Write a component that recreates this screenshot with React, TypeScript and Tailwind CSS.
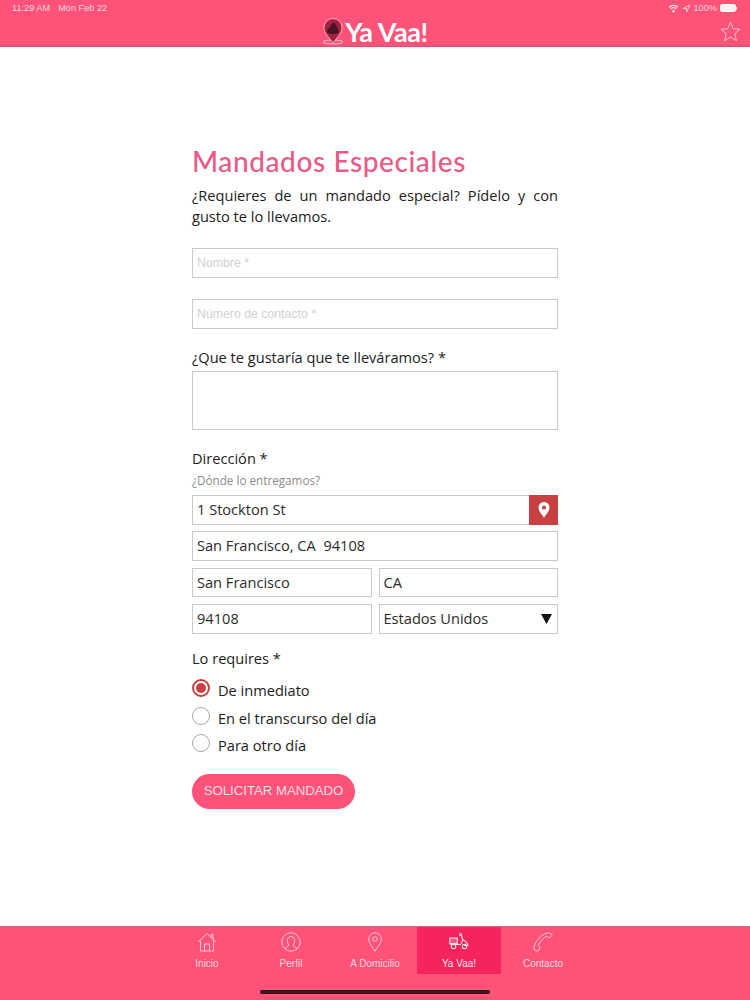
import React from "react";

const inputClass =
    "block w-full h-full min-w-0 border border-[#c9c9c9] bg-white px-[4px] pb-[2px] font-['Open_Sans',sans-serif] text-[14.6px] text-[#2b2b2b] outline-none";

const placeholderClass =
    "block w-full h-[30px] border border-[#c9c9c9] bg-white px-[4px] font-['Liberation_Sans',sans-serif] text-[12.3px] text-[#2b2b2b] outline-none placeholder:text-[#d0d0d0]";

const HomeIcon = () => (
    <svg width="20" height="20" viewBox="0 0 20 20" fill="none" stroke="currentColor" strokeWidth="0.9">
        <path d="M1 10 L10 1.5 L19 10" />
        <path d="M14 5.5 V2.5 H16 V7.5" />
        <path d="M3.5 8.5 V19 H16.5 V8.5" />
        <path d="M7.5 19 V12 H12.5 V19" />
    </svg>
);

const UserIcon = () => (
    <svg width="20" height="20" viewBox="0 0 20 20" fill="none" stroke="currentColor" strokeWidth="0.9">
        <circle cx="10" cy="10" r="9.2" />
        <path d="M4.5 17 C5 14.5 7.5 14.5 8 13 C6.5 11.5 6 9.5 6.5 7.5 C7 5.5 8.5 4.5 10 4.5 C11.5 4.5 13 5.5 13.5 7.5 C14 9.5 13.5 11.5 12 13 C12.5 14.5 15 14.5 15.5 17" />
    </svg>
);

const PinIcon = () => (
    <svg width="14" height="20" viewBox="0 0 14 20" fill="none" stroke="currentColor" strokeWidth="0.9">
        <path d="M7 19.3 C4.5 15 0.8 11.5 0.8 7 A6.2 6.2 0 0 1 13.2 7 C13.2 11.5 9.5 15 7 19.3 Z" />
        <circle cx="7" cy="7" r="2.3" />
    </svg>
);

const ScooterIcon = () => (
    <svg width="20" height="17" viewBox="0 0 20 17" fill="none" stroke="currentColor" strokeWidth="1.1">
        <rect x="0.8" y="5" width="7.5" height="5.5" fill="currentColor" fillOpacity="0.25" />
        <path d="M1 11.5 H11 C12 11.5 13 9.5 13.5 6.5 L12.5 2.5 H10.5" />
        <path d="M13.5 6.5 C15.5 7.5 18.5 9 18.8 12.5 H15" />
        <circle cx="4.5" cy="13.5" r="2.2" />
        <circle cx="15.5" cy="13.5" r="2.2" />
        <path d="M10 1 H13" />
    </svg>
);

// handset drawn diagonally, earpiece up on the right
const PhoneIcon = () => (
    <svg width="20" height="20" viewBox="0 0 20 20" fill="none" stroke="currentColor" strokeWidth="0.9">
        <path d="M1.2 14 C2.5 9 8.5 2.5 13.5 1.2 C15 0.8 18 1 18.8 2.5 C19.2 3.5 18.3 4.6 17.3 5 L15.5 5.6 C14.8 5.2 14.6 4.4 14 4 C10.5 5.5 6.5 10 5.3 13.5 C5.8 14.5 6.5 14.5 6.8 15.3 L5.8 18.2 C5 19 3.2 19.3 2.3 18.6 C1.3 17.8 0.9 15.5 1.2 14 Z" />
    </svg>
);

const tabs = [
    { label: "Inicio", icon: <HomeIcon /> },
    { label: "Perfil", icon: <UserIcon /> },
    { label: "A Domicilio", icon: <PinIcon /> },
    { label: "Ya Vaa!", icon: <ScooterIcon />, active: true },
    { label: "Contacto", icon: <PhoneIcon /> },
];

const radios = [
    { label: "De inmediato", checked: true },
    { label: "En el transcurso del día" },
    { label: "Para otro día" },
];

const StatusBar = () => (
    <div className="flex h-[17px] items-center justify-between pr-[13px] pl-[12px] font-['Liberation_Sans',sans-serif] text-[9.2px] text-[#ffd3dd]">
        <div className="flex gap-[8px]">
            <span>11:29 AM</span>
            <span>Mon Feb 22</span>
        </div>
        <div className="flex items-center gap-[3px]">
            <svg width="11" height="9" viewBox="0 0 11 9" fill="none" stroke="#ffe4ea" strokeWidth="1.2">
                <path d="M1 3.2 C3.5 0.8 7.5 0.8 10 3.2" />
                <path d="M2.8 5 C4.3 3.6 6.7 3.6 8.2 5" />
                <circle cx="5.5" cy="7.3" r="0.7" fill="#ffe4ea" />
            </svg>
            <svg width="9" height="9" viewBox="0 0 9 9" fill="none" stroke="#ffd3dd" strokeWidth="0.9">
                <path d="M8 1 L1 4.5 H4.5 V8 Z" />
            </svg>
            <span>100%</span>
            <div className="flex items-center">
                <div className="h-[8px] w-[16px] rounded-[2px] bg-[#fff3f5]" />
                <div className="h-[3px] w-[1px] bg-[#ffd3dd]" />
            </div>
        </div>
    </div>
);

const Header = () => (
    <header className="relative h-[47px] border-b border-[#e0516f] bg-[#fd5379]">
        <StatusBar />
        <div className="flex h-[29px] items-center justify-center gap-[1px]">
            <svg width="22" height="27" viewBox="0 0 22 27">
                <ellipse cx="11" cy="24" rx="10" ry="2" fill="none" stroke="#ffd3dd" strokeWidth="0.8" />
                <path d="M11 25 C8 20 2 16 2 9.5 A9 9 0 0 1 20 9.5 C20 16 14 20 11 25 Z" fill="#a3213f" stroke="#ffc7d3" strokeWidth="0.8" />
                <path d="M5 14 C6 9 8 11 9 7 C11 3 14 5 15 9 L17 14 C14 17 8 17 5 14 Z" fill="#4a1424" />
            </svg>
            <span className="font-['Lato',sans-serif] text-[27px] leading-none font-bold tracking-[-0.4px] text-white">
                Ya Vaa!
            </span>
        </div>
        <svg className="absolute top-[21px] right-[9px]" width="21" height="21" viewBox="0 0 21 21" fill="none" stroke="#ffc2d0" strokeWidth="1">
            <path d="M10.5 1.2 L13.2 7.8 L20 8.3 L14.8 12.8 L16.5 19.8 L10.5 16 L4.5 19.8 L6.2 12.8 L1 8.3 L7.8 7.8 Z" />
        </svg>
    </header>
);

const Footer = () => (
    <footer className="h-[74px] border-t border-[#e8607f] bg-[#fd5379]">
        <nav className="flex justify-center">
            {tabs.map((tab) => (
                <div
                    key={tab.label}
                    className={`flex h-[47px] w-[84px] flex-col items-center pt-[4px] font-['Liberation_Sans',sans-serif] text-[10px] text-[#ffd3dd] ${
                        tab.active ? "bg-[#f4255c] text-[#ffe4ea]" : ""
                    }`}
                >
                    <div className="flex h-[21px] items-center">{tab.icon}</div>
                    <span className="mt-[6px] leading-[12px]">{tab.label}</span>
                </div>
            ))}
        </nav>
        <div className="mx-auto mt-[16px] h-[4px] w-[230px] rounded-full bg-[#3b1722]" />
    </footer>
);

const App = () => {
    return (
        <div className="flex h-[1000px] w-[750px] flex-col overflow-hidden bg-white">
            <Header />
            <main className="flex-1 px-[192px] pt-[97px] font-['Open_Sans',sans-serif] text-[#1c1c1c]">
                <h1 className="h-[34px] font-['Lato',sans-serif] text-[28px] leading-[34px] font-medium tracking-[0.6px] whitespace-nowrap text-[#ea5a86]">
                    Mandados Especiales
                </h1>
                <p className="mt-[7px] text-justify text-[14.6px] leading-[21px]">
                    ¿Requieres de un mandado especial? Pídelo y con gusto te lo llevamos.
                </p>

                <input className={`mt-[21px] ${placeholderClass}`} placeholder="Nombre *" readOnly />
                <input className={`mt-[21px] ${placeholderClass}`} placeholder="Número de contacto *" readOnly />

                <label className="mt-[18px] block text-[14.6px] leading-[21px]">
                    ¿Que te gustaría que te lleváramos? *
                </label>
                <textarea className="mt-[3px] block h-[59px] w-full resize-none border border-[#c9c9c9] outline-none" readOnly />

                <label className="mt-[18px] block text-[14.6px] leading-[21px]">Dirección *</label>
                <div className="mt-[3px] text-[11.7px] leading-[16px] text-[#8a8a8a]">¿Dónde lo entregamos?</div>

                <div className="mt-[7px] flex h-[30px]">
                    <input className={`${inputClass} border-r-0`} value="1 Stockton St" readOnly />
                    <div className="flex w-[29px] shrink-0 items-center justify-center bg-[#c8403f]">
                        <svg width="12" height="16" viewBox="0 0 12 16">
                            <path fillRule="evenodd" fill="#fff" d="M6 16 C4 12 0.5 9.5 0.5 5.5 A5.5 5.5 0 0 1 11.5 5.5 C11.5 9.5 8 12 6 16 Z M6 3.5 A2 2 0 1 0 6 7.5 A2 2 0 1 0 6 3.5 Z" />
                        </svg>
                    </div>
                </div>
                <div className="mt-[6px] h-[30px]">
                    <input className={inputClass} value="San Francisco, CA  94108" readOnly />
                </div>
                <div className="mt-[7px] grid h-[29px] grid-cols-2 gap-[7px]">
                    <input className={inputClass} value="San Francisco" readOnly />
                    <input className={inputClass} value="CA" readOnly />
                </div>
                <div className="mt-[7px] grid h-[30px] grid-cols-2 gap-[7px]">
                    <input className={inputClass} value="94108" readOnly />
                    <div className="flex items-center justify-between border border-[#c9c9c9] pr-[5px] pb-[1px] pl-[4px] text-[14.6px] text-[#2b2b2b]">
                        <span>Estados Unidos</span>
                        <svg width="11" height="10" viewBox="0 0 11 10">
                            <path d="M0 0 H11 L5.5 10 Z" fill="#111" />
                        </svg>
                    </div>
                </div>

                <div className="mt-[14px] text-[14.6px] leading-[21px]">Lo requires *</div>

                <div className="mt-[10px] flex flex-col">
                    {radios.map((radio) => (
                        <div key={radio.label} className="flex h-[27.5px] items-start gap-[8px]">
                            {radio.checked ? (
                                <div className="flex h-[18px] w-[18px] items-center justify-center rounded-full border-2 border-[#c8403f]">
                                    <div className="h-[10px] w-[10px] rounded-full bg-[#c8403f]" />
                                </div>
                            ) : (
                                <div className="h-[18px] w-[18px] rounded-full border border-[#a8a8a8]" />
                            )}
                            <span className="pt-[1px] text-[14.6px] leading-[21px] text-[#1c1c1c]">{radio.label}</span>
                        </div>
                    ))}
                </div>

                <button className="mt-[12px] h-[35px] w-[163px] rounded-full bg-[#fd5379] font-['Liberation_Sans',sans-serif] text-[13.2px] text-[#ffdbe3]">
                    SOLICITAR MANDADO
                </button>
            </main>
            <Footer />
        </div>
    );
};

export default App;
